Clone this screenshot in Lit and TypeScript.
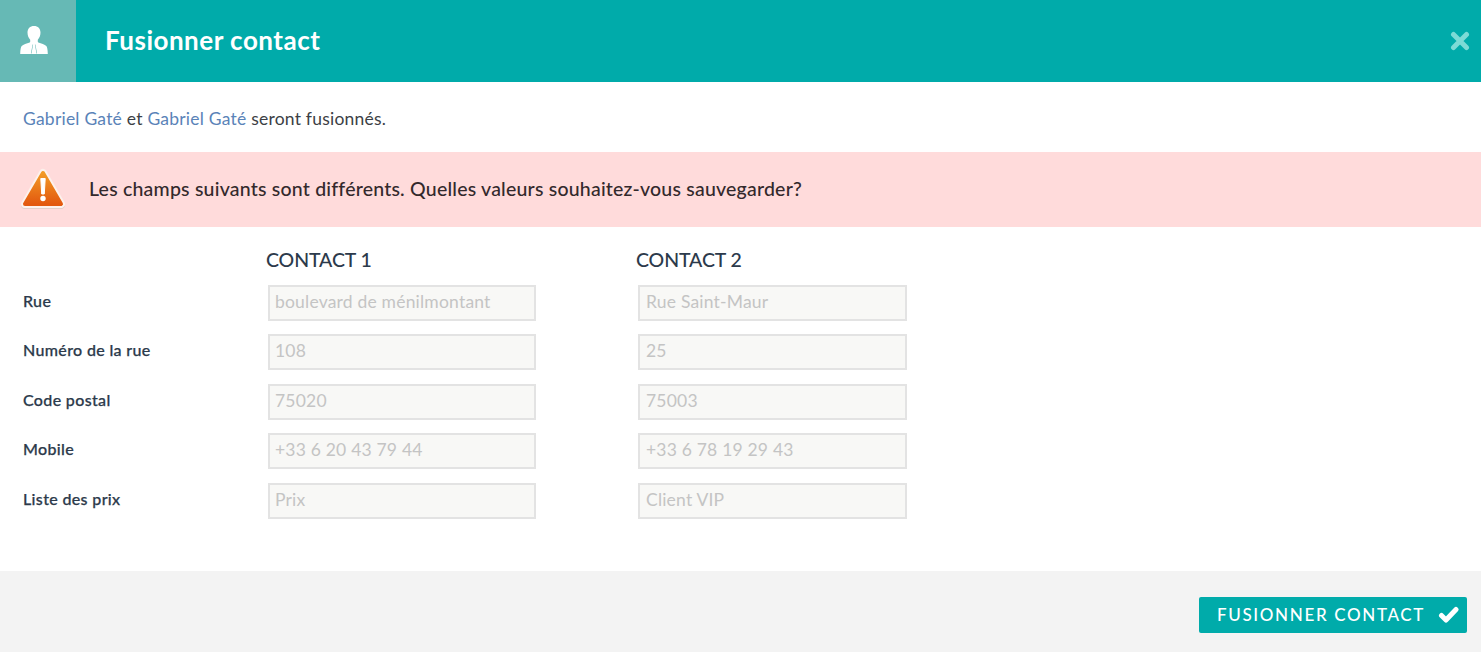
import { LitElement, html, css } from "lit";
import { customElement } from "lit/decorators.js";

const rows: [string, string, string][] = [
  ["Rue", "boulevard de ménilmontant", "Rue Saint-Maur"],
  ["Numéro de la rue", "108", "25"],
  ["Code postal", "75020", "75003"],
  ["Mobile", "+33 6 20 43 79 44", "+33 6 78 19 29 43"],
  ["Liste des prix", "Prix", "Client VIP"],
];

@customElement("app-root")
export class AppRoot extends LitElement {
  static styles = css`
    :host { display: block; width: 1481px; height: 652px; overflow: hidden; background: #fff; font-family: Lato, "Open Sans", sans-serif; color: #2f3a4a; }
    .head { height: 82px; background: #00abaa; display: flex; align-items: center; }
    .tile { width: 76px; height: 82px; background: #66b9b5; box-sizing: border-box; padding: 0 8px 2px 0; display: flex; align-items: center; justify-content: center; }
    .title { margin-left: 29px; margin-bottom: 3px; flex: 1; color: #fff; font-size: 26px; font-weight: 700; letter-spacing: 0.5px; }
    .close { margin-right: 11px; display: flex; }
    .intro { height: 70px; box-sizing: border-box; padding: 3px 0 0 23px; display: flex; align-items: center; font-size: 17.5px; color: #3c3f45; white-space: pre; letter-spacing: 0.22px; }
    .intro span { color: #5a83b8; }
    .alert { height: 75px; background: #ffdbdb; display: flex; align-items: center; padding-left: 20px; gap: 23px; font-size: 19.5px; font-weight: 500; color: #33292c; letter-spacing: 0.21px; }
    .alert div { margin-bottom: 2px; }
    .form { height: 344px; box-sizing: border-box; padding: 21px 0 0 23px; display: grid; grid-template-columns: 245px 370px 270px; grid-template-rows: 30px repeat(5, 49.5px); align-items: center; align-content: start; }
    .form .hd { font-size: 19.5px; font-weight: 500; color: #2c3a4b; height: 25px; line-height: 23px; margin-left: -2px; align-self: start; letter-spacing: -0.1px; }
    .lab { font-size: 16px; font-weight: 500; color: #2c3a4b; margin-top: -5px; -webkit-text-stroke: 0.25px #2c3a4b; letter-spacing: 0.35px; }
    .field { box-sizing: border-box; width: 268px; height: 36px; border: 2px solid #e3e3e3; background: #f8f8f6; color: #c4c4c4; font-size: 17.5px; line-height: 30px; padding-left: 5px; letter-spacing: 0.2px; }
    .col2 { width: 269px; padding-left: 6px; }
    .foot { height: 81px; background: #f3f3f3; display: flex; justify-content: flex-end; align-items: center; padding-right: 14px; padding-top: 7px; box-sizing: border-box; }
    .btn { width: 268px; height: 36px; box-sizing: border-box; border-radius: 2px; background: #00abaa; color: #fff; display: flex; align-items: center; padding-left: 18px; gap: 13px; font-size: 17px; letter-spacing: 1.65px; font-weight: 500; white-space: nowrap; }
    .btn span { margin-bottom: 2px; }
  `;

  render() {
    return html`
      <div class="head">
        <div class="tile">
          <svg width="28" height="28" viewBox="0 0 28 28">
            <path fill="#fff" fill-rule="evenodd" d="M14 0c4 0 6.500 2.700 6.500 6.500 0 3-1.200 5.700-2.700 7.200v2l.5.700c3 .9 6.500 1.800 8 3.700.9 1.100 1.400 3.300 1.500 7.900H.2c.1-4.600.6-6.800 1.500-7.900 1.500-1.900 5-2.800 8-3.700l.5-.7v-2c-1.500-1.500-2.700-4.200-2.700-7.200C7.500 2.700 10 0 14 0zM12.600 18.500l-1.700 9h.6l1.600-9zM15.400 18.500l1.700 9h-.6l-1.600-9z"/>
          </svg>
        </div>
        <div class="title">Fusionner contact</div>
        <div class="close">
          <svg width="20" height="20" viewBox="0 0 20 20"><path d="M3.500 3.500 16.500 16.500M16.500 3.500 3.500 16.500" stroke="#7cdbd6" stroke-width="5" stroke-linecap="round"/></svg>
        </div>
      </div>
      <div class="intro"><span>Gabriel Gaté</span> et <span>Gabriel Gaté</span> seront fusionnés.</div>
      <div class="alert">
        <svg width="46" height="44" viewBox="0 0 46 44">
          <defs>
            <linearGradient id="warn" x1="0" y1="0" x2="0" y2="1">
              <stop offset="0" stop-color="#f29a26"/><stop offset="1" stop-color="#e3590f"/>
            </linearGradient>
          </defs>
          <path d="M23 5 41 36H5z" fill="#e3cfca" stroke="#e3cfca" stroke-width="8" stroke-linejoin="round" transform="translate(0 1)"/>
          <path d="M23 5 41 36H5z" fill="#fdf1ec" stroke="#fdf1ec" stroke-width="8" stroke-linejoin="round"/>
          <path d="M23 5 41 36H5z" fill="url(#warn)" stroke="url(#warn)" stroke-width="4" stroke-linejoin="round"/>
          <path d="M20.800 10.500h4.400l-.9 15.500h-2.600z" fill="#fff" stroke="#fff" stroke-linejoin="round"/>
          <circle cx="23" cy="30.500" r="2.700" fill="#fff"/>
        </svg>
        <div>Les champs suivants sont différents. Quelles valeurs souhaitez-vous sauvegarder?</div>
      </div>
      <div class="form">
        <div></div><div class="hd">CONTACT 1</div><div class="hd">CONTACT 2</div>
        ${rows.map(([l, a, b]) => html`
          <div class="lab">${l}</div>
          <div class="field">${a}</div>
          <div class="field col2">${b}</div>
        `)}
      </div>
      <div class="foot">
        <div class="btn">
          <span>FUSIONNER CONTACT</span>
          <svg width="21" height="18" viewBox="0 0 21 18"><path d="M3.500 9.500 8 14 18 3.500" fill="none" stroke="#fff" stroke-width="5" stroke-linejoin="round" stroke-linecap="round"/></svg>
        </div>
      </div>
    `;
  }
}
